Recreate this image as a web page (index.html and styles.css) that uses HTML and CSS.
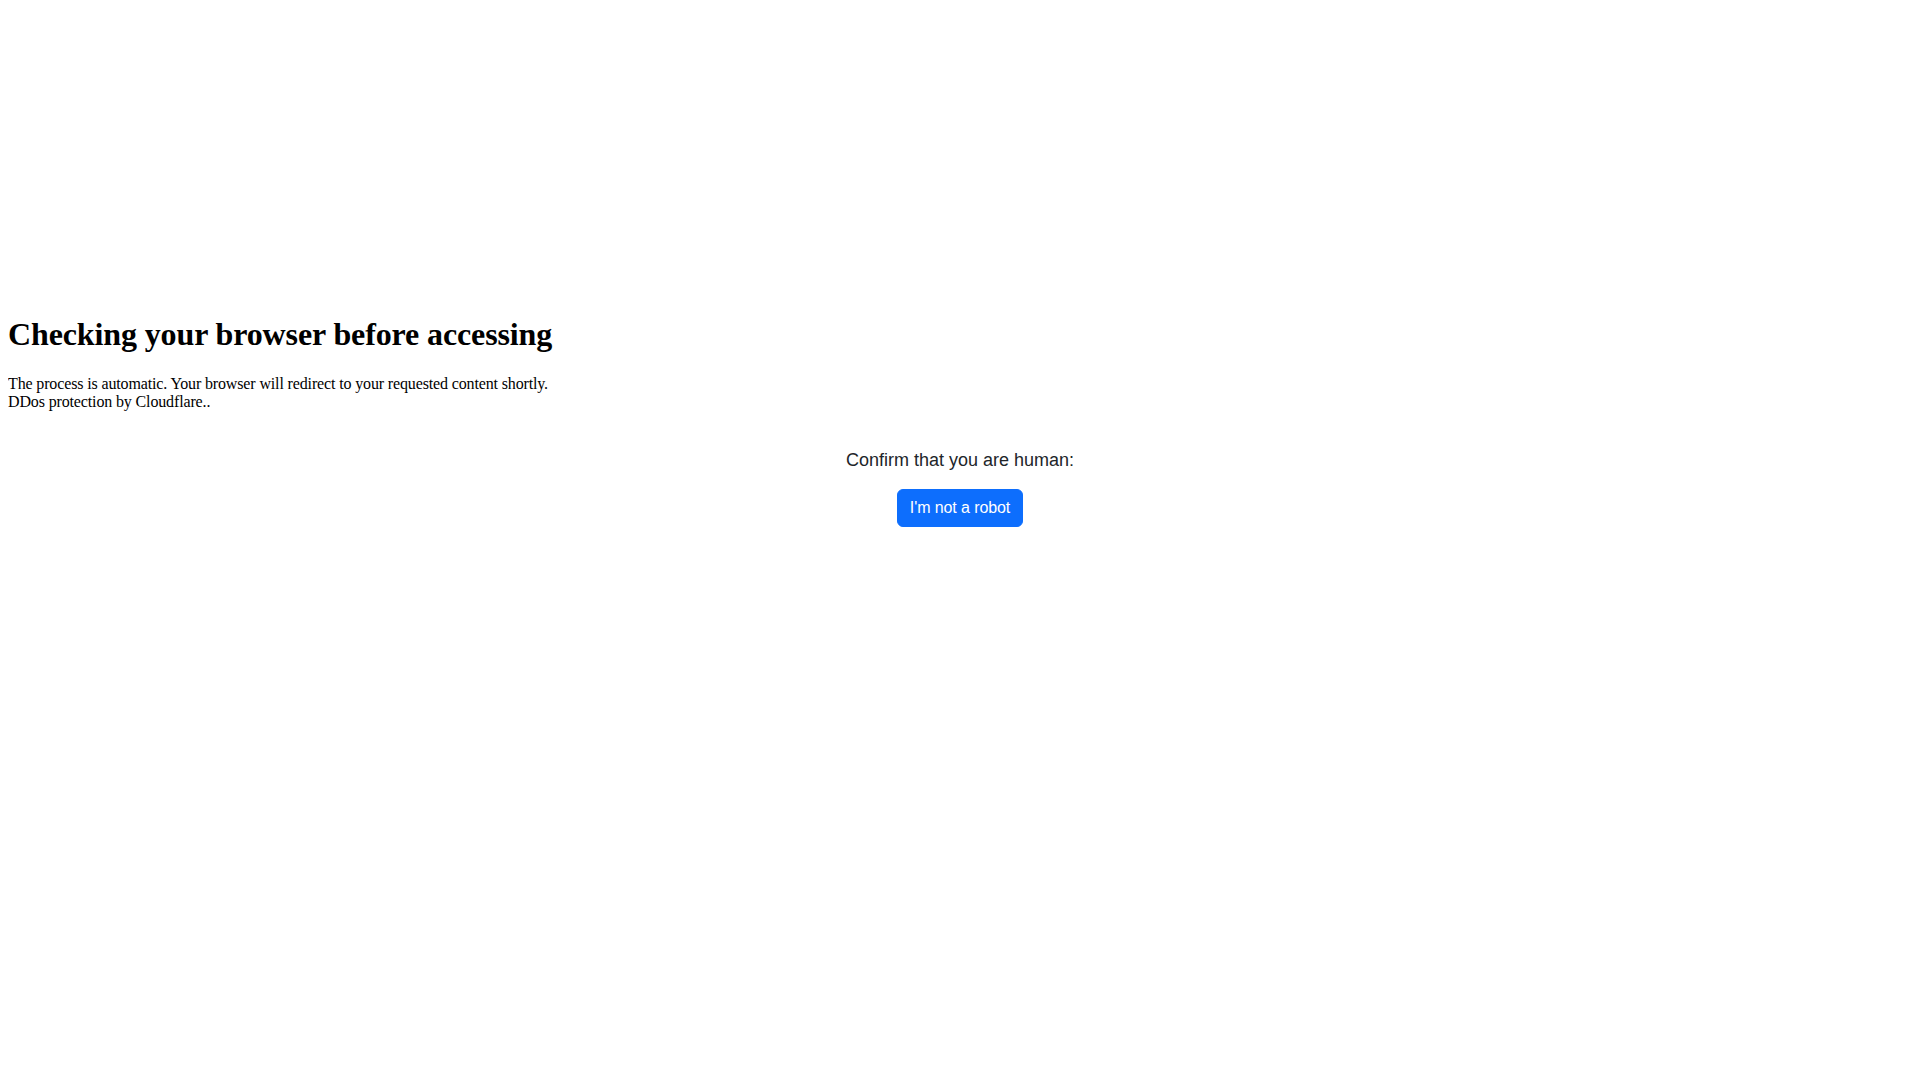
FILE: index.html
```html
<!DOCTYPE html>
<html lang="en">
<head>
    <meta charset="UTF-8">
    <meta name="viewport" content="width=device-width, initial-scale=1.0">
    <title>Just a moment...</title>
    <link rel="stylesheet" href="styles.css">
</head>
<body>
    <div class="page">
        <h1>Checking your browser before accessing</h1>
        <p>The process is automatic. Your browser will redirect to your requested content shortly.<br>DDos protection by Cloudflare..</p>
        <div class="verify">
            <p class="verify-text">Confirm that you are human:</p>
            <button class="verify-btn" type="button">I'm not a robot</button>
        </div>
    </div>
</body>
</html>
```

FILE: styles.css
```css
body {
    margin: 8px;
    font-family: "Liberation Serif", "Times New Roman", serif;
    color: #000;
    background: #fff;
}

.page {
    padding-top: 287px;
}

h1 {
    font-size: 32px;
    letter-spacing: -0.12px;
    margin: 21.44px 0;
}

p {
    font-size: 16px;
    letter-spacing: -0.14px;
    margin: 16px 0;
}

.verify {
    margin-top: 39px;
    text-align: center;
    font-family: "Liberation Sans", Arial, sans-serif;
}

.verify .verify-text {
    margin: 0 0 18px;
    font-size: 18px;
    letter-spacing: 0;
    color: #212529;
}

.verify-btn {
    font-family: "Liberation Sans", Arial, sans-serif;
    font-size: 16px;
    line-height: 24px;
    letter-spacing: -0.1px;
    padding: 6px 12px;
    border: 1px solid #0d6efd;
    border-radius: 6px;
    background-color: #0d6efd;
    color: #fff;
    cursor: pointer;
}
```
